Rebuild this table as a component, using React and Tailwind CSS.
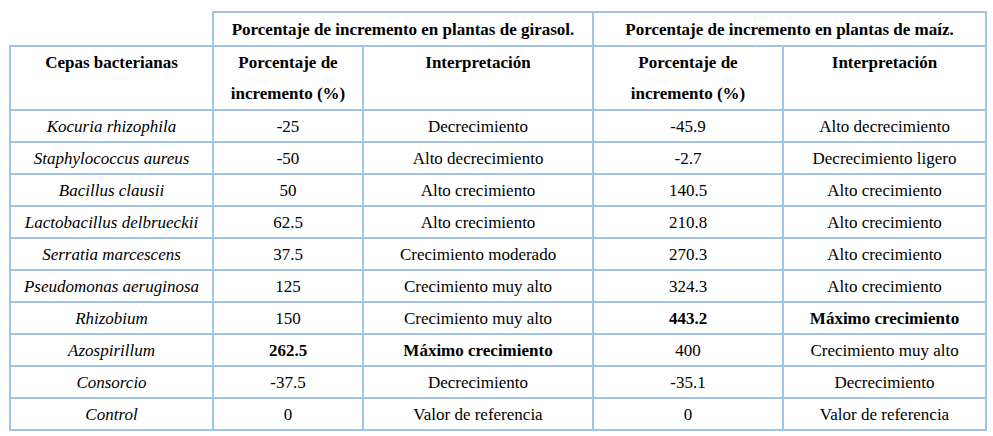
const rows = [
    {name: 'Kocuria rhizophila', g: '-25', gi: 'Decrecimiento', m: '-45.9', mi: 'Alto decrecimiento'},
    {name: 'Staphylococcus aureus', g: '-50', gi: 'Alto decrecimiento', m: '-2.7', mi: 'Decrecimiento ligero'},
    {name: 'Bacillus clausii', g: '50', gi: 'Alto crecimiento', m: '140.5', mi: 'Alto crecimiento'},
    {name: 'Lactobacillus delbrueckii', g: '62.5', gi: 'Alto crecimiento', m: '210.8', mi: 'Alto crecimiento'},
    {name: 'Serratia marcescens', g: '37.5', gi: 'Crecimiento moderado', m: '270.3', mi: 'Alto crecimiento'},
    {name: 'Pseudomonas aeruginosa', g: '125', gi: 'Crecimiento muy alto', m: '324.3', mi: 'Alto crecimiento'},
    {name: 'Rhizobium', g: '150', gi: 'Crecimiento muy alto', m: '443.2', mi: 'Máximo crecimiento', boldM: true},
    {name: 'Azospirillum', g: '262.5', gi: 'Máximo crecimiento', m: '400', mi: 'Crecimiento muy alto', boldG: true},
    {name: 'Consorcio', g: '-37.5', gi: 'Decrecimiento', m: '-35.1', mi: 'Decrecimiento'},
    {name: 'Control', g: '0', gi: 'Valor de referencia', m: '0', mi: 'Valor de referencia'},
];

const cell = "border-2 border-[#a3c4e8] text-center align-top p-0 text-[17px] font-['Liberation_Serif']";

export default function App() {
    return (
        <div className="w-[993px] h-[436px] bg-white pt-[11px] pl-[9px] text-black">
            <table className="table-fixed border-collapse w-[976px] text-[17px] font-['Liberation_Serif']">
                <colgroup>
                    <col className="w-[203px]" />
                    <col className="w-[150px]" />
                    <col className="w-[230px]" />
                    <col className="w-[190px]" />
                    <col className="w-[203px]" />
                </colgroup>
                <thead className="font-bold leading-[31px]">
                    {/* Group headers */}
                    <tr className="h-[34px]">
                        <th className="p-0 border-0"></th>
                        <th colSpan={2} className={`${cell} font-bold pt-[1px]`}>Porcentaje de incremento en plantas de girasol.</th>
                        <th colSpan={2} className={`${cell} font-bold pt-[1px]`}>Porcentaje de incremento en plantas de maíz.</th>
                    </tr>
                    <tr className="h-[63px]">
                        <th className={`${cell} font-bold`}>Cepas bacterianas</th>
                        <th className={`${cell} font-bold`}>Porcentaje de<br />incremento (%)</th>
                        <th className={`${cell} font-bold`}>Interpretación</th>
                        <th className={`${cell} font-bold`}>Porcentaje de<br />incremento (%)</th>
                        <th className={`${cell} font-bold`}>Interpretación</th>
                    </tr>
                </thead>
                <tbody className="leading-[29px]">
                    {rows.map((r) => (
                        <tr key={r.name} className="h-[32px]">
                            <td className={`${cell} pt-[1px] italic`}>{r.name}</td>
                            <td className={`${cell} pt-[1px] ${r.boldG ? 'font-bold' : ''}`}>{r.g}</td>
                            <td className={`${cell} pt-[1px] ${r.boldG ? 'font-bold' : ''}`}>{r.gi}</td>
                            <td className={`${cell} pt-[1px] ${r.boldM ? 'font-bold' : ''}`}>{r.m}</td>
                            <td className={`${cell} pt-[1px] ${r.boldM ? 'font-bold' : ''}`}>{r.mi}</td>
                        </tr>
                    ))}
                </tbody>
            </table>
        </div>
    );
}
